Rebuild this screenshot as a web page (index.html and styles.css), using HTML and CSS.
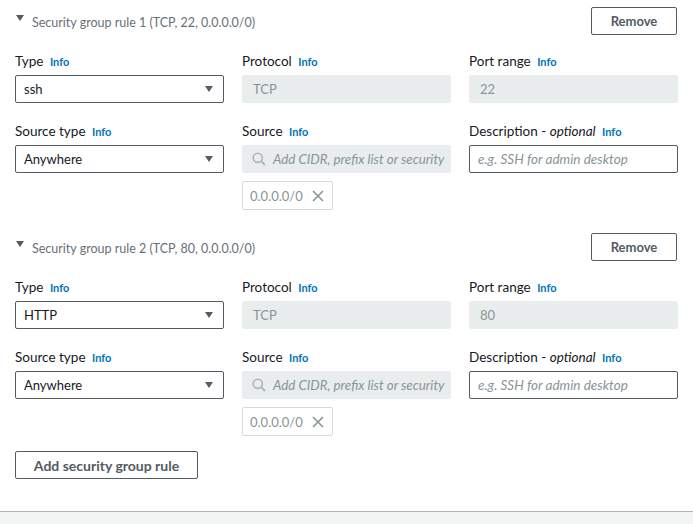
FILE: index.html
```html
<!DOCTYPE html>
<html>
<head>
<meta charset="utf-8">
<link rel="stylesheet" href="styles.css">
</head>
<body>
<div class="page">
  <section class="rule">
    <div class="rule-head">
      <div class="rule-title"><span class="caret"></span><span>Security group rule 1 (TCP, 22, 0.0.0.0/0)</span></div>
      <button class="btn btn-remove">Remove</button>
    </div>
    <div class="grid">
      <div class="field">
        <div class="label">Type <a class="info">Info</a></div>
        <div class="select"><span>ssh</span><span class="arrow"></span></div>
      </div>
      <div class="field">
        <div class="label">Protocol <a class="info">Info</a></div>
        <div class="input disabled">TCP</div>
      </div>
      <div class="field">
        <div class="label">Port range <a class="info">Info</a></div>
        <div class="input disabled">22</div>
      </div>
      <div class="field">
        <div class="label">Source type <a class="info">Info</a></div>
        <div class="select"><span>Anywhere</span><span class="arrow"></span></div>
      </div>
      <div class="field">
        <div class="label">Source <a class="info">Info</a></div>
        <div class="input disabled search">
          <svg class="search-icon" width="14" height="14" viewBox="0 0 14 14"><circle cx="5.8" cy="5.8" r="4.6" fill="none" stroke="#aab7b8" stroke-width="1.6"/><line x1="9.2" y1="9.2" x2="13" y2="13" stroke="#aab7b8" stroke-width="1.8"/></svg>
          <span class="ph">Add CIDR, prefix list or security</span>
        </div>
        <div class="token"><span>0.0.0.0/0</span><svg class="x" width="12" height="12" viewBox="0 0 12 12"><path d="M1 1L11 11M11 1L1 11" stroke="#879596" stroke-width="1.6"/></svg></div>
      </div>
      <div class="field">
        <div class="label">Description - <i>optional</i> <a class="info">Info</a></div>
        <div class="input text"><span class="ph">e.g. SSH for admin desktop</span></div>
      </div>
    </div>
  </section>

  <section class="rule">
    <div class="rule-head">
      <div class="rule-title"><span class="caret"></span><span>Security group rule 2 (TCP, 80, 0.0.0.0/0)</span></div>
      <button class="btn btn-remove">Remove</button>
    </div>
    <div class="grid">
      <div class="field">
        <div class="label">Type <a class="info">Info</a></div>
        <div class="select"><span>HTTP</span><span class="arrow"></span></div>
      </div>
      <div class="field">
        <div class="label">Protocol <a class="info">Info</a></div>
        <div class="input disabled">TCP</div>
      </div>
      <div class="field">
        <div class="label">Port range <a class="info">Info</a></div>
        <div class="input disabled">80</div>
      </div>
      <div class="field">
        <div class="label">Source type <a class="info">Info</a></div>
        <div class="select"><span>Anywhere</span><span class="arrow"></span></div>
      </div>
      <div class="field">
        <div class="label">Source <a class="info">Info</a></div>
        <div class="input disabled search">
          <svg class="search-icon" width="14" height="14" viewBox="0 0 14 14"><circle cx="5.8" cy="5.8" r="4.6" fill="none" stroke="#aab7b8" stroke-width="1.6"/><line x1="9.2" y1="9.2" x2="13" y2="13" stroke="#aab7b8" stroke-width="1.8"/></svg>
          <span class="ph">Add CIDR, prefix list or security</span>
        </div>
        <div class="token"><span>0.0.0.0/0</span><svg class="x" width="12" height="12" viewBox="0 0 12 12"><path d="M1 1L11 11M11 1L1 11" stroke="#879596" stroke-width="1.6"/></svg></div>
      </div>
      <div class="field">
        <div class="label">Description - <i>optional</i> <a class="info">Info</a></div>
        <div class="input text"><span class="ph">e.g. SSH for admin desktop</span></div>
      </div>
    </div>
  </section>

  <div class="actions">
    <button class="btn btn-add">Add security group rule</button>
  </div>
</div>
<div class="footer-bar"></div>
</body>
</html>
```

FILE: styles.css
```css
html, body {
  margin: 0;
  padding: 0;
  background: #ffffff;
  font-family: Lato, "Open Sans", "Liberation Sans", sans-serif;
  color: #16191f;
}
.page {
  padding: 0 15px;
  height: 511px;
  box-sizing: border-box;
}
.rule {
  padding-top: 7px;
}
.rule + .rule {
  margin-top: 16px;
}
.rule-head {
  display: flex;
  justify-content: space-between;
  align-items: center;
  height: 28px;
}
.rule-title {
  display: flex;
  align-items: center;
  font-size: 12.5px;
  color: #687078;
  margin-top: 2px;
}
.caret {
  width: 0;
  height: 0;
  border-left: 4.5px solid transparent;
  border-right: 4.5px solid transparent;
  border-top: 6px solid #545b64;
  margin-left: 1px;
  margin-right: 8px;
  margin-top: -9px;
}
.btn {
  font-family: inherit;
  background: #fff;
  border: 1px solid #545b64;
  border-radius: 2px;
  color: #545b64;
  font-weight: 700;
  font-size: 13px;
  height: 28px;
  padding: 0;
  box-sizing: border-box;
}
.btn-remove {
  width: 86px;
  margin-right: 1px;
}
.grid {
  display: grid;
  grid-template-columns: 209px 209px 209px;
  column-gap: 18px;
  row-gap: 18px;
  margin-top: 16px;
}
.label {
  font-size: 13.5px;
  line-height: 20px;
  height: 20px;
  margin-bottom: 4px;
  color: #16191f;
}
.label i {
  font-style: italic;
  font-weight: 400;
}
.info {
  color: #0073bb;
  font-weight: 700;
  font-size: 11px;
  margin-left: 3px;
}
.select, .input {
  height: 28px;
  box-sizing: border-box;
  display: flex;
  align-items: center;
  font-size: 13px;
  border-radius: 2px;
}
.select {
  border: 1px solid #545b64;
  padding: 0 10px 0 8px;
  justify-content: space-between;
}
.arrow {
  width: 0;
  height: 0;
  border-left: 4.5px solid transparent;
  border-right: 4.5px solid transparent;
  border-top: 6px solid #545b64;
}
.input.disabled {
  background: #eaeded;
  border: 1px solid #eaeded;
  color: #879596;
  padding: 0 10px;
}
.input.text {
  border: 1px solid #545b64;
  padding: 0 8px;
}
.ph {
  font-style: italic;
  color: #879596;
  white-space: nowrap;
}
.input.text .ph {
  font-size: 13.5px;
}
.input.search {
  padding-left: 9px;
}
.search .ph {
  font-size: 13.3px;
}
.search-icon {
  flex: none;
  margin-right: 7px;
}
.token {
  margin-top: 8px;
  width: 91px;
  height: 29px;
  box-sizing: border-box;
  border: 1px solid #d5dbdb;
  border-radius: 2px;
  display: flex;
  align-items: center;
  padding: 0 8px 0 7px;
  justify-content: space-between;
  font-size: 13px;
  color: #879596;
}
.actions {
  margin-top: 15px;
}
.btn-add {
  width: 183px;
  font-size: 14px;
}
.footer-bar {
  height: 13px;
  background: #f2f3f3;
  border-top: 1px solid #aab7b8;
}
```
